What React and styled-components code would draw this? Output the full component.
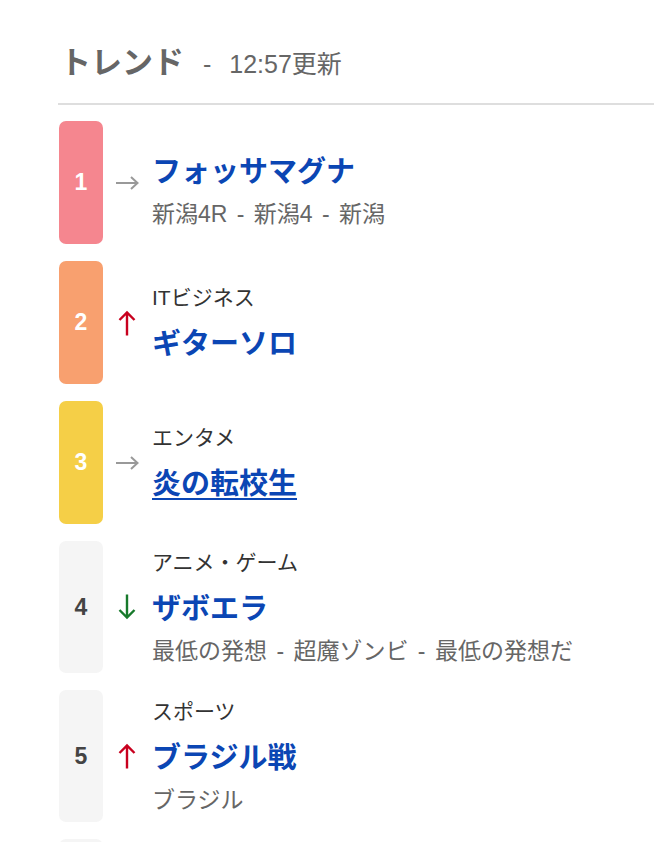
import React from 'react';
import styled, { createGlobalStyle } from 'styled-components';

const GlobalStyle = createGlobalStyle`
    body {
        margin: 0;
        background: #ffffff;
        font-family: "Liberation Sans", "Noto Sans CJK JP", sans-serif;
    }
`
const Page = styled.div`
    padding-left: 58px;
`
const Header = styled.div`
    display: flex;
    align-items: baseline;
    gap: 19px;
    padding: 43px 0 20px 2px;
    border-bottom: 2px solid #dedede;
`
const HeaderTitle = styled.h2`
    margin: 0;
    font-size: 31px;
    line-height: 40px;
    font-weight: 700;
    color: #666;
`
const Updated = styled.span`
    font-size: 25px;
    color: #666;
    word-spacing: 11px;
`
const List = styled.ol`
    list-style: none;
    margin: 0;
    padding: 16px 0 0 1px;
    display: flex;
    flex-direction: column;
    gap: 17px;
`
const Row = styled.li`
    display: flex;
    align-items: center;
    min-height: 123px;
`
const Badge = styled.div`
    align-self: stretch;
    width: 44px;
    flex-shrink: 0;
    border-radius: 7px;
    background: ${p => p.$bg};
    color: ${p => p.$fg};
    display: flex;
    align-items: center;
    justify-content: center;
    font-size: 23px;
    font-weight: 700;
`
const Trend = styled.div`
    width: 24px;
    margin: 0 13px 0 12px;
    display: flex;
    justify-content: center;
    color: ${p => p.$color};
`
const Content = styled.div`
    display: flex;
    flex-direction: column;
    padding: ${p => (p.$lead ? '25px 0 8px' : '8px 0')};
`
const Category = styled.div`
    font-size: 21px;
    line-height: 28px;
    color: #333;
    margin-bottom: 14px;
`
const Title = styled.a`
    font-size: 29px;
    line-height: 36px;
    font-weight: 700;
    color: #0b46b4;
    text-decoration: ${p => (p.$visited ? 'underline' : 'none')};
    text-underline-offset: 4px;
    text-decoration-thickness: 2px;
`
const Sub = styled.div`
    font-size: 23px;
    line-height: 28px;
    color: #666;
    margin-top: 10px;
    word-spacing: 3px;
`

const Arrow = ({ dir }) => {
    if (dir === 'right') {
        return (
            <svg width="24" height="14" viewBox="0 0 24 14" fill="none" stroke="currentColor" strokeWidth="2">
                <path d="M1 7H22.5M16 1L22.5 7L16 13" />
            </svg>
        )
    }
    return (
        <svg width="20" height="26" viewBox="0 0 20 26" fill="none" stroke="currentColor" strokeWidth="2.4"
            style={{ transform: dir === 'down' ? 'rotate(180deg)' : 'none' }}>
            <path d="M10 2.5V25.5M2.5 10L10 2.5L17.5 10" />
        </svg>
    )
}

const arrowColor = { right: '#999', up: '#c8001e', down: '#17792b' }

const items = [
    { rank: 1, bg: '#f5868f', fg: '#fff', dir: 'right', title: 'フォッサマグナ', sub: '新潟4R - 新潟4 - 新潟' },
    { rank: 2, bg: '#f8a06f', fg: '#fff', dir: 'up', category: 'ITビジネス', title: 'ギターソロ' },
    { rank: 3, bg: '#f5cf47', fg: '#fff', dir: 'right', category: 'エンタメ', title: '炎の転校生', visited: true },
    { rank: 4, bg: '#f5f5f5', fg: '#444', dir: 'down', category: 'アニメ・ゲーム', title: 'ザボエラ', sub: '最低の発想 - 超魔ゾンビ - 最低の発想だ' },
    { rank: 5, bg: '#f5f5f5', fg: '#444', dir: 'up', category: 'スポーツ', title: 'ブラジル戦', sub: 'ブラジル' },
]

const App = () => {
    return (
        <Page>
            <GlobalStyle />
            <Header>
                <HeaderTitle>トレンド</HeaderTitle>
                <Updated>- 12:57更新</Updated>
            </Header>
            <List>
                {items.map(item => (
                    <Row key={item.rank}>
                        <Badge $bg={item.bg} $fg={item.fg}>{item.rank}</Badge>
                        <Trend $color={arrowColor[item.dir]}>
                            <Arrow dir={item.dir} />
                        </Trend>
                        <Content $lead={!item.category}>
                            {item.category && <Category>{item.category}</Category>}
                            <Title href="#" $visited={item.visited}>{item.title}</Title>
                            {item.sub && <Sub>{item.sub}</Sub>}
                        </Content>
                    </Row>
                ))}
                <Row>
                    <Badge $bg="#f5f5f5" $fg="#444" />
                </Row>
            </List>
        </Page>
    )
}

export default App
